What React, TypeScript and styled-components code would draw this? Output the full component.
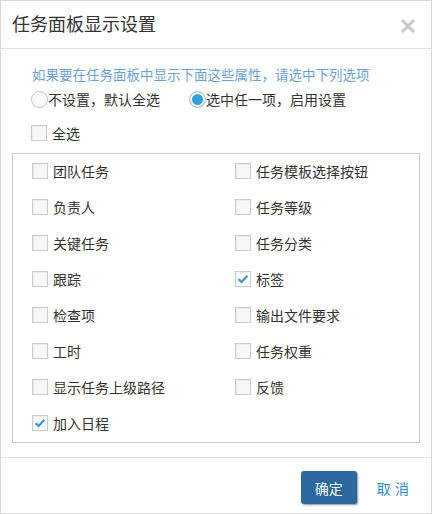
import React, { useState } from "react";
import styled, { createGlobalStyle } from "styled-components";

const Global = createGlobalStyle`
  html, body { margin: 0; padding: 0; background: #fff; }
  body { font-family: "Noto Sans CJK SC", "Microsoft YaHei", "Liberation Sans", sans-serif; color: #333; }
  * { box-sizing: border-box; }
`;

const Dialog = styled.div`
  width: 432px;
  height: 514px;
  border: 1px solid #d9d9d9;
  display: flex;
  flex-direction: column;
  background: #fff;
`;

const Header = styled.div`
  height: 48px;
  border-bottom: 1px solid #e3e3e3;
  display: flex;
  align-items: flex-start;
  justify-content: space-between;
  padding: 10px 14px 0 11px;
`;

const Title = styled.h1`
  margin: 0;
  font-size: 18px;
  font-weight: normal;
  line-height: 24px;
  color: #333;
`;

const Close = styled.button`
  border: 0;
  background: none;
  padding: 0;
  margin-top: 6px;
  width: 18px;
  height: 18px;
  cursor: pointer;
  display: flex;
  align-items: center;
  justify-content: center;
`;

const Body = styled.div`
  flex: 1;
  padding: 16px 11px 0 11px;
  display: flex;
  flex-direction: column;
`;

const Intro = styled.div`
  font-size: 13.5px;
  line-height: 18px;
  color: #6c9fd6;
  padding-left: 20px;
  white-space: nowrap;
`;

const RadioRow = styled.div`
  margin-top: 8px;
  padding-left: 19px;
  display: flex;
  align-items: center;
  gap: 29px;
  height: 17px;
`;

const RadioLabel = styled.label`
  display: flex;
  align-items: center;
  font-size: 14px;
  line-height: 17px;
  color: #333;
  cursor: pointer;
  white-space: nowrap;
`;

const RadioCircle = styled.span<{ $on: boolean }>`
  width: 17px;
  height: 17px;
  border-radius: 50%;
  border: 1px solid #c4c4c4;
  background: ${(p) => (p.$on ? "#2fa3d9" : "#f9f9f9")};
  box-shadow: ${(p) => (p.$on ? "inset 0 0 0 2px #fff" : "none")};
  flex-shrink: 0;
`;

const AllRow = styled.div`
  margin-top: 17px;
  padding-left: 19px;
  height: 16px;
  display: flex;
  align-items: center;
`;

const CheckLabel = styled.label<{ $gap?: number; $lift?: number }>`
  display: flex;
  align-items: center;
  gap: ${(p) => p.$gap ?? 5}px;
  margin-bottom: ${(p) => p.$lift ?? 0}px;
  font-size: 14px;
  line-height: 18px;
  color: #333;
  cursor: pointer;
  white-space: nowrap;
`;

const Box = styled.span<{ $on: boolean }>`
  width: 16px;
  height: 16px;
  border: 1px solid #cbcbcb;
  background: ${(p) => (p.$on ? "#fbfbfb" : "#f7f7f7")};
  box-shadow: inset 1px 1px 1px rgba(0, 0, 0, 0.04);
  display: flex;
  align-items: center;
  justify-content: center;
  flex-shrink: 0;
`;

const Panel = styled.div`
  margin-top: 12px;
  height: 290px;
  border: 1px solid #cccccc;
  padding-left: 19px;
  display: grid;
  grid-template-columns: 203px 1fr;
  grid-auto-rows: 36px;
  align-items: center;
`;

const Footer = styled.div`
  height: 56px;
  border-top: 1px solid #e3e3e3;
  display: flex;
  justify-content: flex-end;
  align-items: flex-start;
  padding: 13px 22px 0 0;
  gap: 20px;
`;

const Primary = styled.button`
  width: 56px;
  height: 33px;
  border: 0;
  border-radius: 3px;
  background: #2c68a0;
  color: #fff;
  font-family: inherit;
  font-size: 14px;
  box-shadow: 1px 1px 2px rgba(0, 0, 0, 0.45);
  cursor: pointer;
`;

const Cancel = styled.button`
  height: 33px;
  border: 0;
  background: none;
  padding: 0;
  color: #2d8bd0;
  font-family: inherit;
  font-size: 14px;
  cursor: pointer;
  word-spacing: 1px;
`;

const Check = () => (
  <svg width="12" height="12" viewBox="0 0 12 12">
    <path d="M1.5 6.2 L4.6 9 L10.5 2.8" fill="none" stroke="#3a9bd8" strokeWidth="2.3" />
  </svg>
);

const Checkbox: React.FC<{ on: boolean; label: string; onToggle: () => void; gap?: number; lift?: number }> = ({
  on,
  label,
  onToggle,
  gap,
  lift,
}) => (
  <CheckLabel $gap={gap} $lift={lift} onClick={onToggle}>
    <Box $on={on}>{on && <Check />}</Box>
    {label}
  </CheckLabel>
);

const ITEMS = [
  "团队任务",
  "任务模板选择按钮",
  "负责人",
  "任务等级",
  "关键任务",
  "任务分类",
  "跟踪",
  "标签",
  "检查项",
  "输出文件要求",
  "工时",
  "任务权重",
  "显示任务上级路径",
  "反馈",
  "加入日程",
];

export default function App() {
  const [mode, setMode] = useState(1);
  const [checked, setChecked] = useState<Record<string, boolean>>({ 标签: true, 加入日程: true });
  const allOn = ITEMS.every((i) => checked[i]);
  const toggle = (k: string) => setChecked((c) => ({ ...c, [k]: !c[k] }));
  const toggleAll = () => {
    const next: Record<string, boolean> = {};
    ITEMS.forEach((i) => (next[i] = !allOn));
    setChecked(next);
  };
  return (
    <>
      <Global />
      <Dialog>
        <Header>
          <Title>任务面板显示设置</Title>
          <Close aria-label="关闭">
            <svg width="16" height="16" viewBox="0 0 16 16">
              <path d="M2 2 L14 14 M14 2 L2 14" stroke="#c8c8c8" strokeWidth="3" />
            </svg>
          </Close>
        </Header>
        <Body>
          <Intro>如果要在任务面板中显示下面这些属性，请选中下列选项</Intro>
          <RadioRow>
            <RadioLabel onClick={() => setMode(0)}>
              <RadioCircle $on={mode === 0} />
              不设置，默认全选
            </RadioLabel>
            <RadioLabel onClick={() => setMode(1)}>
              <RadioCircle $on={mode === 1} />
              选中任一项，启用设置
            </RadioLabel>
          </RadioRow>
          <AllRow>
            <Checkbox on={allOn} label="全选" onToggle={toggleAll} gap={5} />
          </AllRow>
          <Panel>
            {ITEMS.map((i) => (
              <Checkbox key={i} on={!!checked[i]} label={i} onToggle={() => toggle(i)} lift={3} />
            ))}
          </Panel>
        </Body>
        <Footer>
          <Primary>确定</Primary>
          <Cancel>取 消</Cancel>
        </Footer>
      </Dialog>
    </>
  );
}
